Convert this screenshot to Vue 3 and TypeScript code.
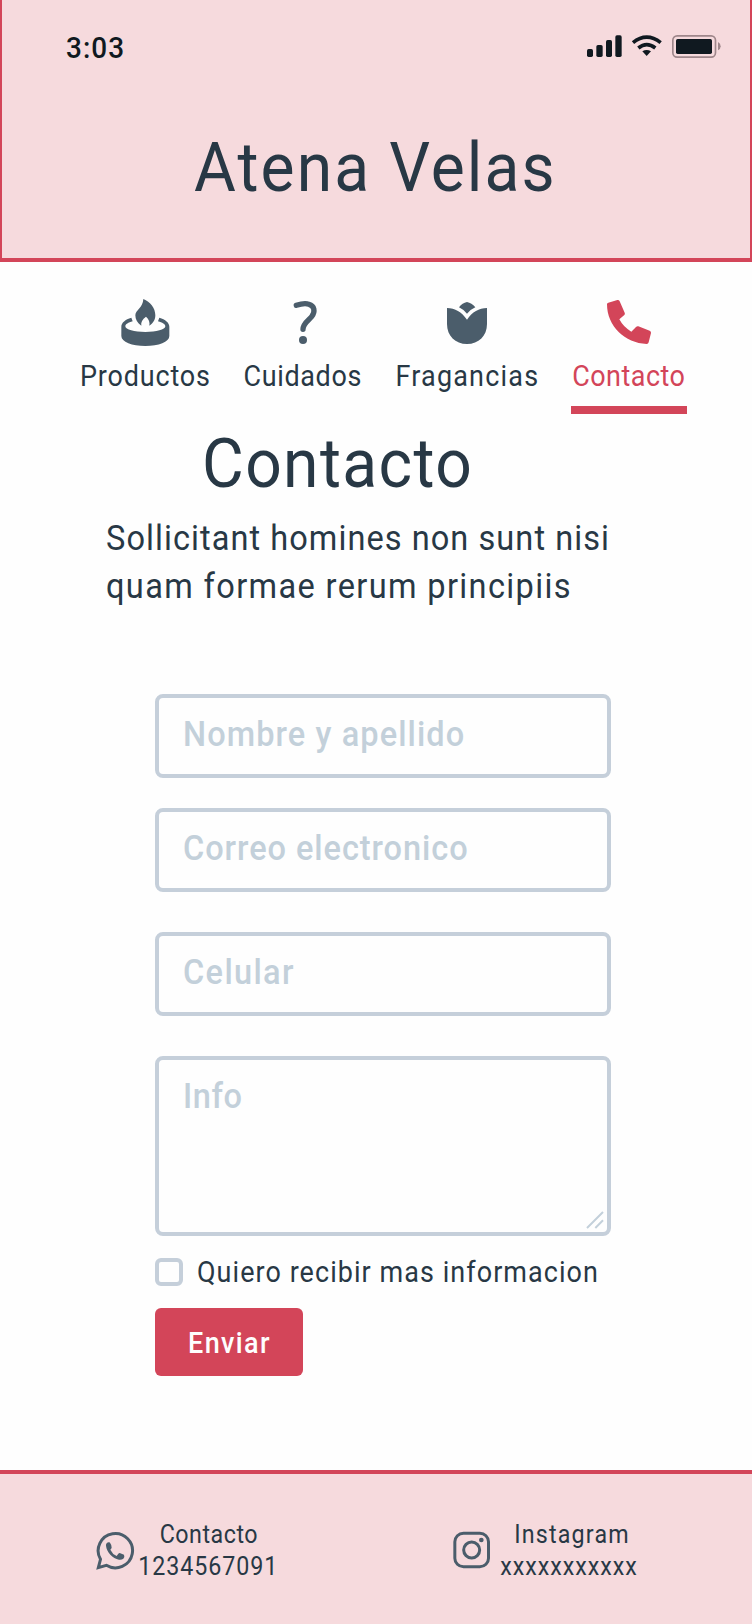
<script setup lang="ts">
import { ref } from 'vue'

interface NavItem {
  id: string
  label: string
  active?: boolean
}

interface Field {
  id: string
  placeholder: string
}

const navItems: NavItem[] = [
  { id: 'productos', label: 'Productos' },
  { id: 'cuidados', label: 'Cuidados' },
  { id: 'fragancias', label: 'Fragancias' },
  { id: 'contacto', label: 'Contacto', active: true },
]

const fields: Field[] = [
  { id: 'nombre', placeholder: 'Nombre y apellido' },
  { id: 'correo', placeholder: 'Correo electronico' },
  { id: 'celular', placeholder: 'Celular' },
]

const wantsInfo = ref(false)
</script>

<template>
  <div class="page">
    <header class="header">
      <div class="status">
        <span class="narrow time">3:03</span>
        <svg class="status-icons" viewBox="624 96 414 84">
          <g fill="#101920">
            <rect x="633" y="147" width="18" height="24" rx="5" />
            <rect x="661" y="135" width="19" height="36" rx="5" />
            <rect x="690" y="120" width="18" height="51" rx="5" />
            <rect x="718" y="106" width="19" height="65" rx="5" />
            <path d="M799 154Q812 146 825 154L812 168Z" />
            <rect x="900" y="117" width="108" height="45" rx="5" />
          </g>
          <g fill="none" stroke="#101920" stroke-width="11">
            <path d="M771 128Q812 95 854 128" />
            <path d="M787 144Q812 124 838 144" />
          </g>
          <rect x="890.500" y="107.500" width="128" height="64" rx="13" fill="none" stroke="#9f878b" stroke-width="5" />
          <path d="M1026 126Q1034 130 1034 138.500Q1034 147 1026 151Z" fill="#9f878b" />
        </svg>
      </div>
      <h1 class="narrow brand">Atena Velas</h1>
    </header>

    <nav class="nav">
      <a v-for="item in navItems" :key="item.id" class="nav-item" :class="[item.id, { active: item.active }]">
        <svg v-if="item.id === 'productos'" class="nav-icon" viewBox="182 54 150 150">
          <path d="M183 140C183 128 195 118 213 113L217 124C204 127 195 133 195 139C195 149 222 156 255 156C288 156 315 149 315 139C315 133 306 127 293 124L297 113C315 118 327 128 327 140V168C327 186 295 198 255 198C215 198 183 186 183 168Z" />
          <path d="M249 57C270 66 285 84 285 106C285 120 278 130 267 137C269 127 266 118 257 110C246 118 241 127 243 137C231 130 225 118 225 106C225 90 248 84 249 57Z" />
        </svg>
        <svg v-else-if="item.id === 'cuidados'" class="nav-icon" viewBox="654 54 150 150">
          <path class="line" d="M709 76C724 71 740 70 747 73C763 77 767 95 755 110C747 120 729 130 729 148" />
          <circle cx="729" cy="180" r="12" />
        </svg>
        <svg v-else-if="item.id === 'fragancias'" class="nav-icon" viewBox="186 54 150 150">
          <path d="M201 84C225 84 245 96 261 119C277 96 297 84 321 84V132C321 168 296 192 261 192C226 192 201 168 201 132Z" />
          <path d="M261 66Q275 69 286 82Q272 88 261 101Q250 88 237 82Q247 69 261 66Z" />
        </svg>
        <svg v-else class="nav-icon" viewBox="672 54 150 150">
          <path d="M681 73Q681 69 685 68L712 60Q717 59 719 64L734 98Q736 102 733 105L718 118Q730 141 754 155L768 141Q771 138 775 139L809 152Q814 154 813 159L806 187Q805 192 800 192C735 190 681 138 681 73Z" />
        </svg>
        <span class="narrow nav-label">{{ item.label }}</span>
      </a>
    </nav>

    <main class="main">
      <h2 class="narrow heading">Contacto</h2>
      <p class="intro">
        <span class="narrow line-one">Sollicitant homines non sunt nisi</span>
        <span class="narrow line-two">quam formae rerum principiis</span>
      </p>

      <form class="form" @submit.prevent>
        <div v-for="field in fields" :key="field.id" class="field" :class="field.id">
          <input class="narrow control" type="text" :placeholder="field.placeholder" />
        </div>
        <div class="field area">
          <textarea class="narrow control" placeholder="Info"></textarea>
          <svg class="grip" viewBox="0 0 18 18">
            <path d="M1 17L17 1M9.300 17L17 9.300" />
          </svg>
        </div>
        <label class="check">
          <input v-model="wantsInfo" class="box" type="checkbox" />
          <span class="narrow check-label">Quiero recibir mas informacion</span>
        </label>
        <button class="submit" type="submit"><span class="narrow">Enviar</span></button>
      </form>
    </main>

    <footer class="footer">
      <div class="social whatsapp">
        <svg viewBox="285 213 120 120">
          <path class="stroke" d="M295 323L301.500 298A51.500 51.500 0 1 1 319 316Z" />
          <path d="M318 257C317 249 325 244 330 248Q335 254 335 263Q334 266 331 269Q337 282 350 288L355 281Q358 278 361 280L372 284Q375 291 370 296Q365 300 357 299C338 296 320 276 318 257Z" />
        </svg>
        <div class="social-text">
          <span class="narrow name">Contacto</span>
          <span class="narrow value">1234567091</span>
        </div>
      </div>
      <div class="social instagram">
        <svg viewBox="229 213 120 120">
          <rect class="stroke" x="237.500" y="219.500" width="101" height="101" rx="26" />
          <circle class="stroke" cx="288" cy="270" r="24" />
          <circle cx="317" cy="240" r="7" />
        </svg>
        <div class="social-text">
          <span class="narrow name">Instagram</span>
          <span class="narrow value">xxxxxxxxxxx</span>
        </div>
      </div>
    </footer>
  </div>
</template>

<style>
body {
  margin: 0;
  background: #fefefe;
}
</style>

<style scoped>
.page {
  display: flex;
  flex-direction: column;
  width: 752px;
  height: 1624px;
  overflow: hidden;
  box-sizing: border-box;
  background: #fefefe;
  color: #283845;
  font-family: Roboto, "Liberation Sans", sans-serif;
}

h1,
h2,
p {
  margin: 0;
  font-weight: 400;
}

/* Condenses the grotesque letterforms a little */
.narrow {
  display: block;
  white-space: nowrap;
  transform: scaleX(0.93);
  transform-origin: 0 50%;
}

.header {
  height: 262px;
  box-sizing: border-box;
  border: solid #d34559;
  border-width: 0 2px 4px;
  background: #f6dadd;
}

.status {
  display: flex;
  justify-content: space-between;
  padding: 32px 28px 0 64px;
  height: 28px;
}

.time {
  font-size: 30px;
  font-weight: 500;
  line-height: 31px;
  letter-spacing: 1.1px;
  color: #101920;
}

.status-icons {
  width: 138px;
  height: 28px;
}

.brand {
  margin: 68px 0 0 192px;
  font-size: 69px;
  line-height: 80px;
  letter-spacing: 2.25px;
}

.nav {
  display: flex;
  gap: 33px;
  height: 152px;
  padding-left: 80px;
}

.nav-item {
  display: flex;
  flex-direction: column;
  align-items: center;
  box-sizing: border-box;
  padding-top: 36px;
}

.productos {
  width: 131px;
}

.cuidados {
  width: 118px;
}

.fragancias {
  width: 144px;
}

.contacto {
  width: 116px;
  margin-left: -1px;
}

.nav-item.active {
  border-bottom: 8px solid #d34559;
  color: #d34559;
}

.nav-icon {
  flex: none;
  width: 50px;
  height: 50px;
  fill: #4b5d6b;
}

.active .nav-icon {
  fill: #d34559;
}

.nav-icon .line {
  fill: none;
  stroke: #4b5d6b;
  stroke-width: 16;
  stroke-linecap: round;
}

.nav-label {
  margin-top: 10px;
  font-size: 29px;
  line-height: 36px;
  transform-origin: 50% 50%;
}

.productos .nav-label {
  letter-spacing: 0.9px;
}

.cuidados .nav-label {
  letter-spacing: 0.7px;
}

.fragancias .nav-label {
  letter-spacing: 1.3px;
}

.contacto .nav-label {
  letter-spacing: 0.5px;
}

.main {
  height: 1056px;
}

.heading {
  margin: 10px 0 0 201.700px;
  font-size: 69px;
  line-height: 80px;
  letter-spacing: 1.47px;
}

.intro {
  margin: 11px 0 0 105.500px;
  font-size: 35px;
  line-height: 48px;
}

.line-one {
  letter-spacing: 1.13px;
}

.line-two {
  letter-spacing: 1.46px;
}

.form {
  display: flex;
  flex-direction: column;
  width: 456px;
  margin: 83px 0 0 155px;
}

.field {
  position: relative;
  box-sizing: border-box;
  height: 84px;
  padding: 1px 0 0 23.600px;
  overflow: hidden;
  border: 4px solid #c5cfda;
  border-radius: 8px;
}

.correo {
  margin-top: 30px;
}

.celular,
.area {
  margin-top: 40px;
}

.area {
  height: 180px;
}

.control {
  width: 440px;
  height: 72px;
  padding: 0;
  border: 0;
  outline: 0;
  background: transparent;
  color: #283845;
  font: 500 35px/72px Roboto, "Liberation Sans", sans-serif;
  letter-spacing: 1.16px;
}

.correo .control {
  letter-spacing: 1px;
}

.celular .control {
  letter-spacing: 1.45px;
}

.area .control {
  height: 160px;
  resize: none;
  overflow: hidden;
  letter-spacing: 0.6px;
}

.control::placeholder {
  color: #c3d0da;
  opacity: 1;
}

.grip {
  position: absolute;
  right: 3px;
  bottom: 3px;
  width: 18px;
  height: 18px;
  fill: none;
  stroke: #c3d0da;
  stroke-width: 2;
}

.check {
  display: flex;
  align-items: center;
  gap: 14px;
  height: 28px;
  margin-top: 22px;
}

.box {
  appearance: none;
  flex: none;
  width: 28px;
  height: 28px;
  margin: 0;
  border: 4px solid #c5cfda;
  border-radius: 6px;
}

.box:checked {
  background: #d34559;
}

.check-label {
  font-size: 29px;
  line-height: 36px;
  letter-spacing: 1.14px;
}

.submit {
  width: 148px;
  height: 68px;
  margin-top: 22px;
  padding: 2px 0 0 32.500px;
  border: 0;
  border-radius: 6px;
  background: #d34559;
  color: #fefefe;
  font: 500 29px/36px Roboto, "Liberation Sans", sans-serif;
  letter-spacing: 1.5px;
  text-align: left;
}

.footer {
  display: flex;
  height: 154px;
  box-sizing: border-box;
  border-top: 4px solid #d34559;
  background: #f6dadd;
}

.social {
  display: flex;
  align-items: flex-start;
}

.social svg {
  flex: none;
  width: 40px;
  height: 40px;
  margin-top: 57px;
  fill: #4b5d6b;
}

.social .stroke {
  fill: none;
  stroke: #4b5d6b;
  stroke-width: 9;
}

.social-text {
  display: flex;
  flex-direction: column;
  align-items: center;
  width: 144px;
  padding-top: 44.500px;
  font-size: 25px;
  line-height: 32px;
}

.social-text .narrow {
  transform-origin: 50% 50%;
}

.whatsapp {
  padding-left: 95px;
}

.whatsapp .social-text {
  margin-left: 1.500px;
}

.whatsapp .name {
  letter-spacing: 0.55px;
}

.whatsapp .value {
  letter-spacing: 1px;
}

.instagram {
  margin-left: 171.500px;
}

.instagram .social-text {
  margin-left: 4.700px;
}

.instagram .name {
  margin-left: 7px;
  letter-spacing: 1.25px;
}

.instagram .value {
  letter-spacing: 1.05px;
}
</style>
